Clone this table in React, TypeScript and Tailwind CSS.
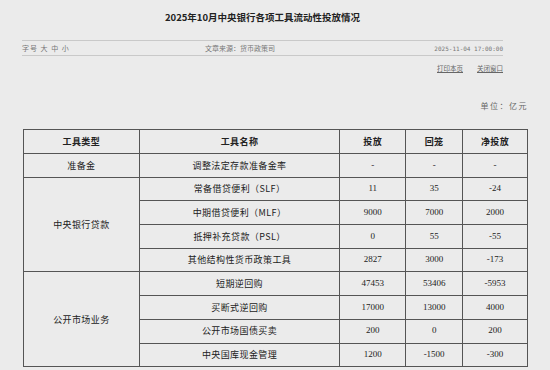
import React from "react";

const rows: {
  type?: string;
  span?: number;
  name: string;
  put: string;
  back: string;
  net: string;
  thick?: boolean;
}[] = [
  { type: "准备金", span: 1, name: "调整法定存款准备金率", put: "-", back: "-", net: "-" },
  { type: "中央银行贷款", span: 4, name: "常备借贷便利（SLF）", put: "11", back: "35", net: "-24" },
  { name: "中期借贷便利（MLF）", put: "9000", back: "7000", net: "2000" },
  { name: "抵押补充贷款（PSL）", put: "0", back: "55", net: "-55" },
  { name: "其他结构性货币政策工具", put: "2827", back: "3000", net: "-173" },
  { type: "公开市场业务", span: 4, name: "短期逆回购", put: "47453", back: "53406", net: "-5953", thick: true },
  { name: "买断式逆回购", put: "17000", back: "13000", net: "4000" },
  { name: "公开市场国债买卖", put: "200", back: "0", net: "200" },
  { name: "中央国库现金管理", put: "1200", back: "-1500", net: "-300", thick: true },
];

const cjk = "font-['Noto_Sans_CJK_SC',sans-serif]";
const num = "font-['Liberation_Serif','Noto_Sans_CJK_SC',serif]";

export default function App() {
  return (
    <div className={`w-[550px] h-[370px] overflow-hidden bg-[#ebebeb] text-[#222] ${cjk}`}>
      <div className="ml-[22px] w-[481px] h-[34px] flex items-center justify-center text-[9.5px] font-bold">
        2025年10月中央银行各项工具流动性投放情况
      </div>

      <div className="ml-[22px] w-[481px] mt-[6px] h-[16px] border-y border-[#c9c9c9] flex items-center text-[7px] text-[#777]">
        <div className="w-[183px] tracking-[1px]">字号 大 中 小</div>
        <div className="flex-1">文章来源：货币政策司</div>
        <div className={`font-['DejaVu_Sans_Mono',monospace] text-[6px]`}>2025-11-04 17:00:00</div>
      </div>

      <div className="ml-[22px] w-[481px] h-[26px] flex items-center justify-end gap-[14px] text-[6.5px] text-[#666]">
        <span className="underline">打印本页</span>
        <span className="underline">关闭窗口</span>
      </div>

      <div className="ml-[22px] w-[506px] h-[47px] flex items-center justify-end text-[8px] text-[#666] tracking-[1.5px]">
        单位：亿元
      </div>

      <table className="ml-[23px] w-[505px] border-collapse border border-[#444] text-[9px] tracking-[0.4px]">
        <colgroup>
          <col className="w-[116px]" />
          <col className="w-[201px]" />
          <col className="w-[66px]" />
          <col className="w-[57px]" />
          <col className="w-[65px]" />
        </colgroup>
        <thead>
          <tr className="h-[24px] font-bold">
            <td className="border border-[#555] text-center">工具类型</td>
            <td className="border border-[#555] text-center">工具名称</td>
            <td className="border border-[#555] text-center">投放</td>
            <td className="border border-[#555] text-center">回笼</td>
            <td className="border border-[#555] text-center">净投放</td>
          </tr>
        </thead>
        <tbody>
          {rows.map((r) => {
            const b = r.thick ? "border border-[#555] border-t-black" : "border border-[#555]";
            return (
              <tr key={r.name} className="h-[23.7px]">
                {r.type && (
                  <td rowSpan={r.span} className={`${b} text-center`}>
                    {r.type}
                  </td>
                )}
                <td className={`${b} text-center`}>{r.name}</td>
                <td className={`${b} text-center ${num} tracking-normal`}>{r.put}</td>
                <td className={`${b} text-center ${num} tracking-normal`}>{r.back}</td>
                <td className={`${b} text-center ${num} tracking-normal`}>{r.net}</td>
              </tr>
            );
          })}
        </tbody>
      </table>
    </div>
  );
}
